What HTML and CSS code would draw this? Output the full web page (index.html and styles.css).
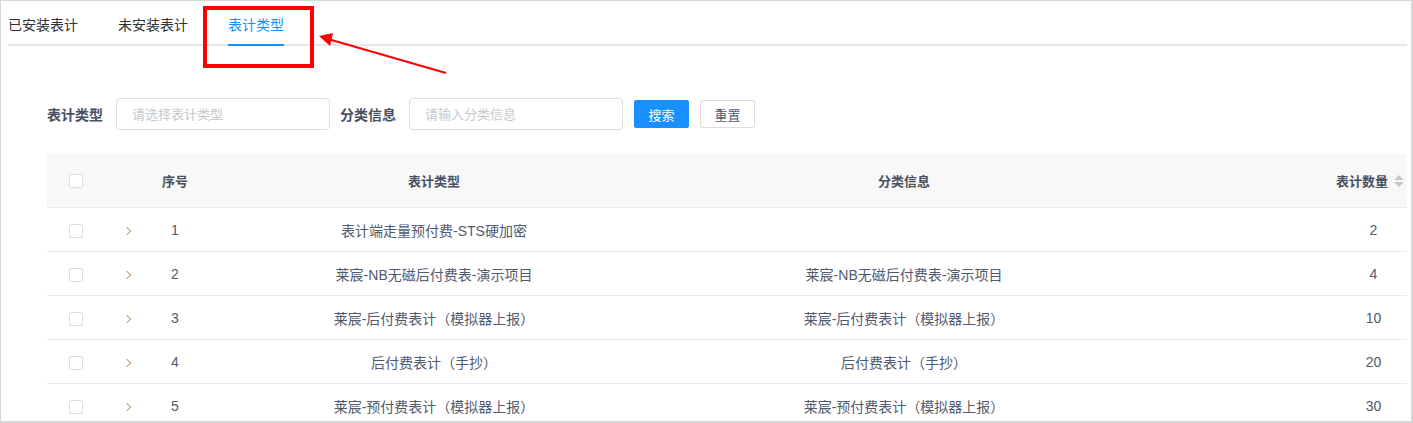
FILE: index.html
```html
<!DOCTYPE html>
<html lang="zh-CN">
<head>
  <meta charset="UTF-8">
  <title>表计类型</title>
  <link rel="stylesheet" href="styles.css">
</head>
<body>
  <div class="frame">
    <!-- 标签页 -->
    <div class="tabs">
      <div class="tab">已安装表计</div>
      <div class="tab">未安装表计</div>
      <div class="tab active">表计类型</div>
    </div>

    <!-- 搜索栏 -->
    <div class="search-form">
      <label class="form-label">表计类型</label>
      <input class="form-input" type="text" placeholder="请选择表计类型">
      <label class="form-label">分类信息</label>
      <input class="form-input" type="text" placeholder="请输入分类信息">
      <button class="btn btn-primary">搜索</button>
      <button class="btn">重置</button>
    </div>

    <!-- 表格 -->
    <table class="meter-table">
      <colgroup>
        <col style="width:58px">
        <col style="width:46px">
        <col style="width:48px">
        <col style="width:470px">
        <col style="width:470px">
        <col style="width:197px">
        <col style="width:71px">
      </colgroup>
      <thead>
        <tr>
          <th><span class="checkbox"></span></th>
          <th></th>
          <th>序号</th>
          <th>表计类型</th>
          <th>分类信息</th>
          <th></th>
          <th class="col-count">
            <span class="sort-head">表计数量<span class="sort-icon"><i class="up"></i><i class="down"></i></span></span>
          </th>
        </tr>
      </thead>
      <tbody>
        <tr>
          <td><span class="checkbox"></span></td>
          <td><span class="expand"></span></td>
          <td>1</td>
          <td>表计端走量预付费-STS硬加密</td>
          <td></td>
          <td></td>
          <td class="num">2</td>
        </tr>
        <tr>
          <td><span class="checkbox"></span></td>
          <td><span class="expand"></span></td>
          <td>2</td>
          <td>莱宸-NB无磁后付费表-演示项目</td>
          <td>莱宸-NB无磁后付费表-演示项目</td>
          <td></td>
          <td class="num">4</td>
        </tr>
        <tr>
          <td><span class="checkbox"></span></td>
          <td><span class="expand"></span></td>
          <td>3</td>
          <td>莱宸-后付费表计（模拟器上报）</td>
          <td>莱宸-后付费表计（模拟器上报）</td>
          <td></td>
          <td class="num">10</td>
        </tr>
        <tr>
          <td><span class="checkbox"></span></td>
          <td><span class="expand"></span></td>
          <td>4</td>
          <td>后付费表计（手抄）</td>
          <td>后付费表计（手抄）</td>
          <td></td>
          <td class="num">20</td>
        </tr>
        <tr>
          <td><span class="checkbox"></span></td>
          <td><span class="expand"></span></td>
          <td>5</td>
          <td>莱宸-预付费表计（模拟器上报）</td>
          <td>莱宸-预付费表计（模拟器上报）</td>
          <td></td>
          <td class="num">30</td>
        </tr>
      </tbody>
    </table>

    <!-- 标注：红框和箭头 -->
    <svg class="annotation" width="1413" height="423" viewBox="0 0 1413 423">
      <rect x="205" y="8" width="107" height="58" fill="none" stroke="#ff0000" stroke-width="4"/>
      <line x1="446" y1="73" x2="328" y2="39" stroke="#ff0000" stroke-width="2"/>
      <polygon points="319,36 333,33 330,46" fill="#ff0000"/>
    </svg>
  </div>
</body>
</html>
```

FILE: styles.css
```css
body {
  margin: 0;
  font-family: "Liberation Sans", "Noto Sans CJK SC", sans-serif;
  background-color: #fff;
}

.frame {
  position: relative;
  box-sizing: border-box;
  width: 1413px;
  height: 423px;
  overflow: hidden;
  border: 1px solid #d6d6d6;
  border-right-width: 2px;
  border-bottom-width: 2px;
  padding: 0 4px 0 7px;
}

.tabs {
  display: flex;
  border-bottom: 2px solid #e4e7ed;
}

.tab {
  font-size: 14px;
  color: #303133;
  padding-top: 5px;
  height: 38px;
  line-height: 38px;
  margin-right: 40px;
  margin-bottom: -2px;
  border-bottom: 2px solid transparent;
}

.tab.active {
  color: #1890ff;
  border-bottom-color: #1890ff;
}

.search-form {
  display: flex;
  align-items: center;
  margin: 52px 0 0 39px;
}

.form-label {
  font-size: 14px;
  font-weight: bold;
  color: #495060;
  margin-right: 13px;
}

.form-input {
  box-sizing: border-box;
  width: 214px;
  height: 32px;
  border: 1px solid #dcdee2;
  border-radius: 4px;
  padding: 0 15px;
  font-family: inherit;
  font-size: 13px;
  margin-right: 10px;
  outline: none;
}

.form-input::placeholder {
  color: #c5c8ce;
}

.btn {
  box-sizing: border-box;
  width: 55px;
  height: 28px;
  margin-right: 11px;
  border: 1px solid #dcdee2;
  border-radius: 2px;
  background-color: #fff;
  color: #515a6e;
  font-family: inherit;
  font-size: 13px;
  padding: 0;
  cursor: pointer;
}

.form-input + .btn {
  margin-left: 1px;
}

.btn-primary {
  background-color: #1890ff;
  border-color: #1890ff;
  color: #fff;
}

.meter-table {
  margin: 24px 0 0 39px;
  width: 1360px;
  table-layout: fixed;
  border-collapse: collapse;
  font-size: 14px;
  color: #515a6e;
}

.meter-table th {
  height: 53px;
  padding: 0;
  background-color: #f8f8f9;
  font-size: 13px;
  font-weight: bold;
  color: #495060;
  text-align: center;
  border-bottom: 1px solid #e8eaec;
}

.meter-table td {
  height: 43px;
  padding: 0;
  text-align: center;
  white-space: nowrap;
  border-bottom: 1px solid #e8eaec;
}

.meter-table td.num {
  padding-left: 4px;
}

.meter-table th.col-count {
  text-align: right;
  padding-right: 3px;
}

.checkbox {
  display: inline-block;
  box-sizing: border-box;
  width: 14px;
  height: 14px;
  border: 1px solid #dcdee2;
  border-radius: 2px;
  background-color: #fff;
  vertical-align: middle;
}

.expand {
  display: inline-block;
  width: 5px;
  height: 5px;
  border-top: 1px solid #b89f7c;
  border-right: 1px solid #b89f7c;
  transform: rotate(45deg);
  margin-left: -3px;
  vertical-align: middle;
}

.sort-head {
  display: inline-flex;
  align-items: center;
  gap: 6px;
}

.sort-icon {
  display: inline-flex;
  flex-direction: column;
  gap: 2px;
}

.sort-icon i {
  display: block;
  width: 0;
  height: 0;
  border-left: 5px solid transparent;
  border-right: 5px solid transparent;
}

.sort-icon .up {
  border-bottom: 5px solid #c5c8ce;
}

.sort-icon .down {
  border-top: 5px solid #c5c8ce;
}

.annotation {
  position: absolute;
  top: -1px;
  left: -1px;
  pointer-events: none;
}
```
